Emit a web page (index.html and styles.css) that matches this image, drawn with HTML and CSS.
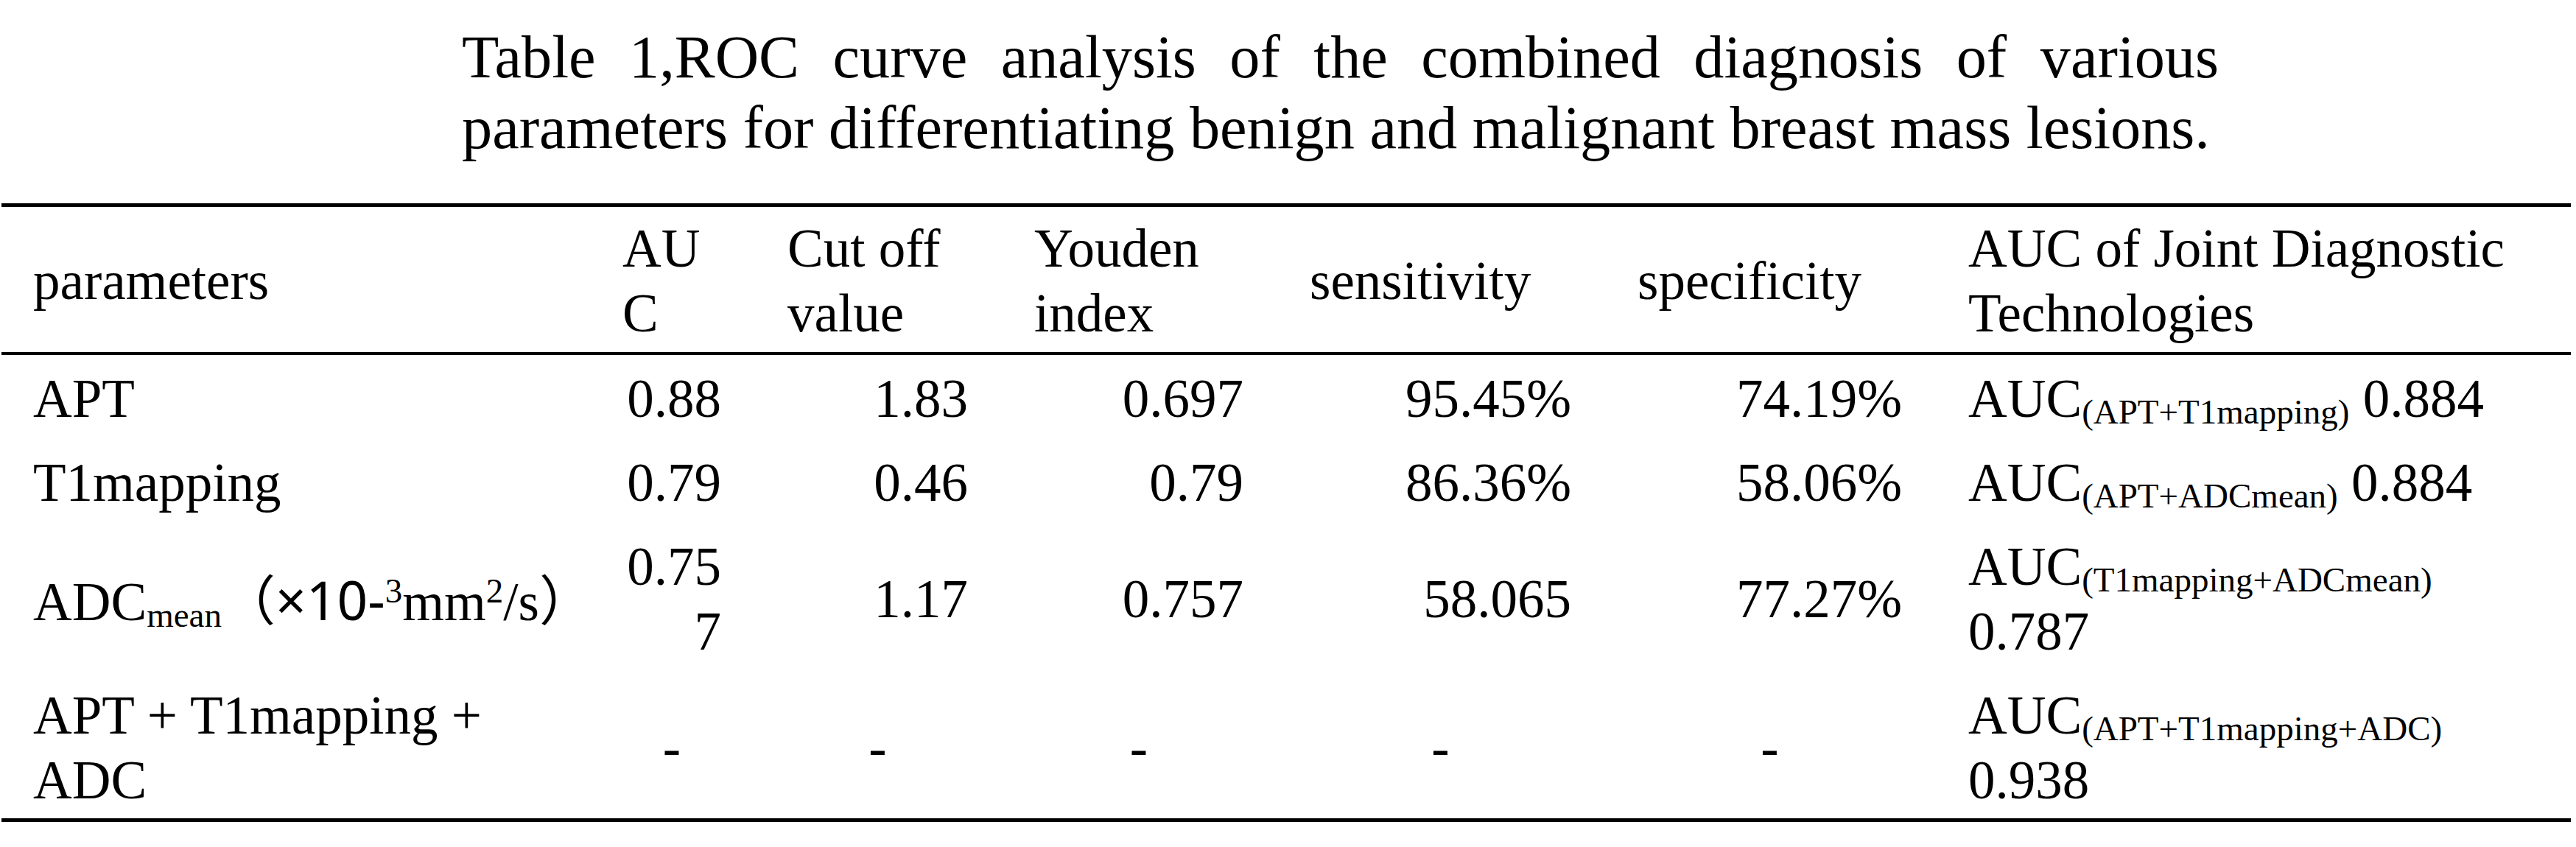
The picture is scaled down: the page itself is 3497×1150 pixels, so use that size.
FILE: index.html
```html
<!DOCTYPE html>
<html lang="en">
<head>
<meta charset="utf-8">
<title>Table 1 – ROC curve analysis</title>
<link rel="stylesheet" href="styles.css">
</head>
<body>
<main class="page">
  <p class="caption">Table 1,ROC curve analysis of the combined diagnosis of various parameters for differentiating benign and malignant breast mass lesions.</p>
  <div class="table" role="table">
    <div class="row head" role="row">
      <div class="cell">parameters</div>
      <div class="cell wrap">AUC</div>
      <div class="cell">Cut off value</div>
      <div class="cell">Youden index</div>
      <div class="cell">sensitivity</div>
      <div class="cell">specificity</div>
      <div class="cell last">AUC of Joint Diagnostic Technologies</div>
    </div>
    <div class="row body-row" role="row">
      <div class="cell">APT</div>
      <div class="cell num wrap">0.88</div>
      <div class="cell num">1.83</div>
      <div class="cell num">0.697</div>
      <div class="cell num">95.45%</div>
      <div class="cell num">74.19%</div>
      <div class="cell last">AUC<span class="sub">(APT+T1mapping)</span> 0.884</div>
    </div>
    <div class="row body-row" role="row">
      <div class="cell">T1mapping</div>
      <div class="cell num wrap">0.79</div>
      <div class="cell num">0.46</div>
      <div class="cell num">0.79</div>
      <div class="cell num">86.36%</div>
      <div class="cell num">58.06%</div>
      <div class="cell last">AUC<span class="sub">(APT+ADCmean)</span> 0.884</div>
    </div>
    <div class="row body-row" role="row">
      <div class="cell nowrap">ADC<span class="sub">mean</span><span class="cjk">（</span><span class="sans">×10-</span><span class="sup">3</span>mm<span class="sup">2</span>/s<span class="cjk">）</span></div>
      <div class="cell num wrap">0.757</div>
      <div class="cell num">1.17</div>
      <div class="cell num">0.757</div>
      <div class="cell num">58.065</div>
      <div class="cell num">77.27%</div>
      <div class="cell last">AUC<span class="sub">(T1mapping+ADCmean)</span> 0.787</div>
    </div>
    <div class="row body-row" role="row">
      <div class="cell">APT + T1mapping + ADC</div>
      <div class="cell dash">-</div>
      <div class="cell dash">-</div>
      <div class="cell dash">-</div>
      <div class="cell dash">-</div>
      <div class="cell dash">-</div>
      <div class="cell last">AUC<span class="sub">(APT+T1mapping+ADC)</span> 0.938</div>
    </div>
  </div>
</main>
</body>
</html>
```

FILE: styles.css
```css
html,
body {
  margin: 0;
  padding: 0;
  background: #ffffff;
}

body {
  font-family: "Liberation Serif", "Times New Roman", serif;
  color: #000000;
}

.page {
  width: 3497px;
  padding-top: 30px;
}

.caption {
  margin: 0 0 54px 627px;
  width: 2385px;
  font-size: 82.3px;
  line-height: 96px;
  text-align: justify;
}

.table {
  margin-left: 2px;
  width: 3488px;
  border-top: 5px solid #000000;
  border-bottom: 5px solid #000000;
  font-size: 73px;
  line-height: 88px;
}

.row {
  display: grid;
  grid-template-columns: 800px 224px 335px 374px 445px 449px 818px;
  align-items: center;
  padding-left: 43px;
}

.head {
  padding-top: 13px;
  padding-bottom: 8px;
  border-bottom: 4px solid #000000;
}

.body-row {
  padding-top: 16px;
  padding-bottom: 10px;
}

.body-row:last-child {
  padding-bottom: 7px;
}

.cell {
  padding-right: 90px;
  text-align: left;
}

.cell.last {
  padding-right: 48px;
}

.num {
  text-align: right;
}

.dash {
  text-align: center;
}

.wrap {
  overflow-wrap: anywhere;
}

.nowrap {
  white-space: nowrap;
}

.sub {
  font-size: 47px;
  line-height: 0;
  vertical-align: -9px;
}

.sup {
  font-size: 47px;
  line-height: 0;
  vertical-align: 24px;
}

.cjk {
  font-family: "Noto Sans CJK SC", "Noto Sans CJK JP", sans-serif;
}

.sans {
  font-family: "Noto Sans", "Noto Sans CJK SC", sans-serif;
}
```
